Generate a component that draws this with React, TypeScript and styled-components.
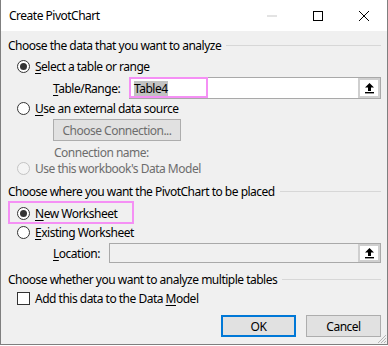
import React from 'react'
import styled, { createGlobalStyle } from 'styled-components'

const GlobalStyle = createGlobalStyle`
  html, body {
    margin: 0;
    padding: 0;
    background: #ffffff;
  }
  body {
    font-family: 'Noto Sans', 'Open Sans', sans-serif;
    font-size: 12px;
    color: #000;
  }
`

const Window = styled.div`
  width: 388px;
  height: 345px;
  box-sizing: border-box;
  border: 1px solid #7f7f7f;
  border-top: none;
  background: #f0f0f0;
  display: flex;
  flex-direction: column;
  position: relative;
  letter-spacing: -0.5px;
`

const TitleBar = styled.div`
  height: 31px;
  background: #ffffff;
  display: flex;
  align-items: center;
  padding-left: 8px;
`

const Title = styled.div`
  flex: 1;
  font-size: 12px;
`

const WinButton = styled.div`
  width: 46px;
  height: 31px;
  display: flex;
  align-items: center;
  justify-content: center;
`

const Body = styled.div`
  flex: 1;
  display: flex;
  flex-direction: column;
  padding: 0 6px 0 7px;
`

const Header = styled.div<{ $mt: number }>`
  margin-top: ${({ $mt }) => $mt}px;
  height: 18px;
  display: flex;
  align-items: center;
  gap: 5px;
  &::after {
    content: '';
    flex: 1;
    height: 1px;
    background: #d7d7d7;
  }
`

const Row = styled.div<{ $mt?: number; $h: number; $indent: number }>`
  margin-top: ${({ $mt }) => $mt || 0}px;
  height: ${({ $h }) => $h}px;
  display: flex;
  align-items: center;
  padding-left: ${({ $indent }) => $indent}px;
`

const Highlight = styled.div`
  margin-top: 1px;
  height: 23px;
  width: 126px;
  box-sizing: border-box;
  border: 2px solid #f590f5;
  display: flex;
  align-items: center;
  padding-left: 7px;
  padding-top: 2px;
`

const Radio = styled.span<{ $on?: boolean; $disabled?: boolean }>`
  width: 13px;
  height: 13px;
  box-sizing: border-box;
  border-radius: 50%;
  border: 1px solid ${({ $disabled }) => ($disabled ? '#c4c4c4' : '#333')};
  background: ${({ $disabled }) => ($disabled ? '#f4f4f4' : '#fff')};
  display: inline-flex;
  align-items: center;
  justify-content: center;
  margin-right: 5px;
  &::after {
    content: '';
    display: ${({ $on }) => ($on ? 'block' : 'none')};
    width: 7px;
    height: 7px;
    border-radius: 50%;
    background: #333;
  }
`

const Check = styled.span`
  width: 13px;
  height: 13px;
  box-sizing: border-box;
  border: 1px solid #333;
  background: #fff;
  margin-right: 5px;
`

const Label = styled.span<{ $disabled?: boolean; $w?: number }>`
  color: ${({ $disabled }) => ($disabled ? '#6d6d6d' : '#000')};
  width: ${({ $w }) => ($w ? `${$w}px` : 'auto')};
  flex-shrink: 0;
`

const Field = styled.div<{ $disabled?: boolean }>`
  flex: 1;
  height: 100%;
  box-sizing: border-box;
  border: 1px solid #a9a9a9;
  background: ${({ $disabled }) => ($disabled ? '#f0f0f0' : '#fff')};
  display: flex;
  align-items: center;
  position: relative;
`

const FieldText = styled.span`
  margin-left: 4px;
  background: #c2c2c2;
  line-height: 15px;
`

const Pink = styled.div`
  position: absolute;
  left: -1px;
  top: -1px;
  width: 79px;
  height: 21px;
  box-sizing: border-box;
  border: 2px solid #f590f5;
  pointer-events: none;
`

const Picker = styled.div`
  margin-left: auto;
  margin-right: 0;
  width: 22px;
  height: 100%;
  box-sizing: border-box;
  border: 2px solid #cfcfcf;
  background: #fff;
  display: flex;
  align-items: center;
  justify-content: center;
`

const PushButton = styled.div<{ $w: number; $default?: boolean; $disabled?: boolean }>`
  width: ${({ $w }) => $w}px;
  height: 100%;
  box-sizing: border-box;
  border: ${({ $default }) => ($default ? '2px solid #0078d7' : '1px solid #adadad')};
  background: #e1e1e1;
  color: ${({ $disabled }) => ($disabled ? '#6d6d6d' : '#000')};
  display: flex;
  align-items: center;
  justify-content: center;
`

const Footer = styled.div`
  margin-top: 8px;
  height: 22px;
  display: flex;
  justify-content: flex-end;
  gap: 10px;
`

const Grip = styled.svg`
  position: absolute;
  right: 0;
  bottom: 0;
`

const U = styled.span`
  text-decoration: underline;
  text-underline-offset: 2px;
`

const UploadIcon = () => (
  <svg width="11" height="12" viewBox="0 0 11 12">
    <path d="M5.5 1 L10 5.5 L7 5.5 L7 9 L4 9 L4 5.5 L1 5.5 Z" fill="#000" />
    <rect x="1" y="10" width="9" height="1.4" fill="#000" />
  </svg>
)

export default function App() {
  return (
    <>
      <GlobalStyle />
      <Window>
        <TitleBar>
          <Title>Create PivotChart</Title>
          <WinButton>
            <svg width="10" height="10" viewBox="0 0 10 10">
              <rect x="0" y="4.5" width="10" height="1" fill="#c8c8c8" />
            </svg>
          </WinButton>
          <WinButton>
            <svg width="10" height="10" viewBox="0 0 10 10">
              <rect x="0.5" y="0.5" width="9" height="9" fill="none" stroke="#000" />
            </svg>
          </WinButton>
          <WinButton>
            <svg width="10" height="10" viewBox="0 0 10 10">
              <path d="M0 0 L10 10 M10 0 L0 10" stroke="#000" strokeWidth="1" />
            </svg>
          </WinButton>
        </TitleBar>
        <Body>
          <Header $mt={5}>Choose the data that you want to analyze</Header>
          <Row $mt={3} $h={18} $indent={9}>
            <Radio $on />
            <Label>
              <U>S</U>elect a table or range
            </Label>
          </Row>
          <Row $mt={2} $h={22} $indent={45}>
            <Label $w={76}>
              <U>T</U>able/Range:
            </Label>
            <Field>
              <Pink />
              <FieldText>Table4</FieldText>
              <Picker>
                <UploadIcon />
              </Picker>
            </Field>
          </Row>
          <Row $h={18} $indent={9}>
            <Radio />
            <Label>
              <U>U</U>se an external data source
            </Label>
          </Row>
          <Row $mt={2} $h={22} $indent={45}>
            <PushButton $w={128} $disabled>
              Choose Connection...
            </PushButton>
          </Row>
          <Row $mt={3} $h={16} $indent={46}>
            <Label $disabled>Connection name:</Label>
          </Row>
          <Row $h={16} $indent={9}>
            <Radio $disabled />
            <Label $disabled>Use this workbook's Data Model</Label>
          </Row>
          <Header $mt={6}>Choose where you want the PivotChart to be placed</Header>
          <Highlight>
            <Radio $on />
            <Label>
              <U>N</U>ew Worksheet
            </Label>
          </Highlight>
          <Row $h={17} $indent={9}>
            <Radio />
            <Label>
              <U>E</U>xisting Worksheet
            </Label>
          </Row>
          <Row $mt={2} $h={20} $indent={45}>
            <Label $w={56}>
              <U>L</U>ocation:
            </Label>
            <Field $disabled>
              <Picker>
                <UploadIcon />
              </Picker>
            </Field>
          </Row>
          <Header $mt={7}>Choose whether you want to analyze multiple tables</Header>
          <Row $mt={1} $h={18} $indent={9}>
            <Check />
            <Label>
              Add this data to the Data <U>M</U>odel
            </Label>
          </Row>
          <Footer>
            <PushButton $w={75} $default>
              OK
            </PushButton>
            <PushButton $w={75}>Cancel</PushButton>
          </Footer>
        </Body>
        <Grip width="12" height="12" viewBox="0 0 12 12">
          <path d="M11 3 L3 11 M11 6 L6 11 M11 9 L9 11" stroke="#b5b5b5" strokeWidth="1" />
        </Grip>
      </Window>
    </>
  )
}
